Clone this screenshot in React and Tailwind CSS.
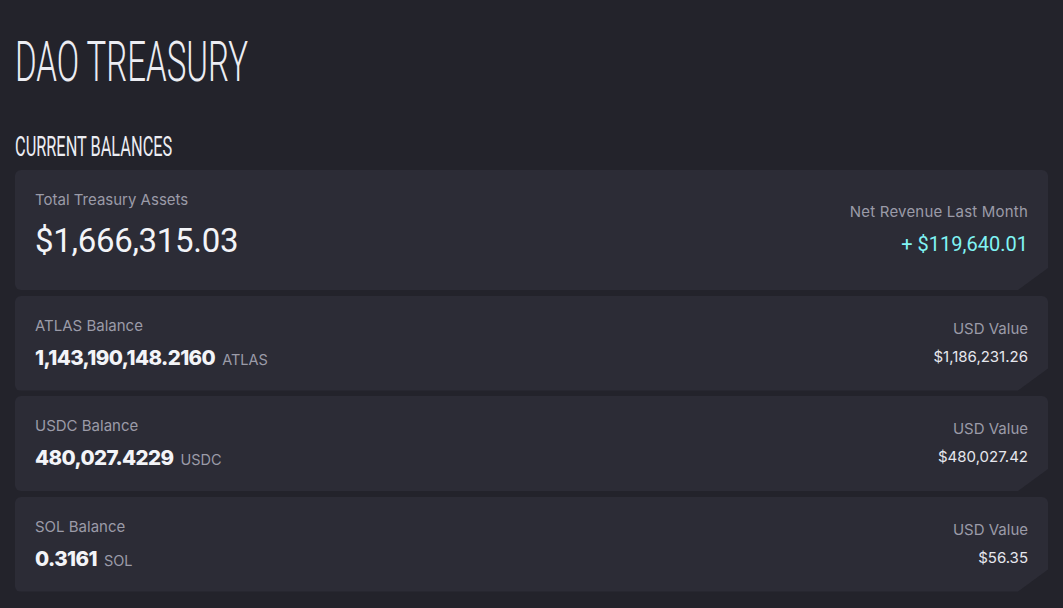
import React from 'react';

const balances = [
  { label: 'ATLAS Balance', amount: '1,143,190,148.2160', unit: 'ATLAS', usd: '$1,186,231.26' },
  { label: 'USDC Balance', amount: '480,027.4229', unit: 'USDC', usd: '$480,027.42' },
  { label: 'SOL Balance', amount: '0.3161', unit: 'SOL', usd: '$56.35' },
];

const cardClass =
  'bg-[#2c2c36] rounded-md [clip-path:polygon(0_0,100%_0,100%_calc(100%-22px),calc(100%-30px)_100%,0_100%)]';

const App = () => {
  return (
    <div className="min-h-[608px] bg-[#23232b] px-[15px] pt-[34px] pb-4 font-['Inter','Roboto',sans-serif]">
      <div className="h-[56px]">
        <h1 className="font-['Roboto',sans-serif] font-light text-[#ecedf3] text-[56px] leading-[56px] origin-left scale-x-[0.59] inline-block whitespace-nowrap">
          DAO TREASURY
        </h1>
      </div>

      <div className="mt-[44px] h-[27px]">
        <h2 className="font-['Roboto',sans-serif] text-[#ecedf3] text-[27px] leading-[27px] origin-left scale-x-[0.605] inline-block whitespace-nowrap">
          CURRENT BALANCES
        </h2>
      </div>

      <div className="mt-[9px] flex flex-col gap-[5.5px]">
        <div className={`${cardClass} h-[120px] px-5 flex justify-between`}>
          <div className="pt-[20px]">
            <div className="text-[15px] text-[#9b9ba8] leading-[20px]">Total Treasury Assets</div>
            <div className="mt-[12px] font-['Roboto',sans-serif] text-[33px] leading-[38px] text-[#f3f4f8] tracking-[-0.3px]">
              $1,666,315.03
            </div>
          </div>
          <div className="pt-[32px] text-right">
            <div className="text-[15px] text-[#9b9ba8] leading-[20px] tracking-[0.2px]">Net Revenue Last Month</div>
            <div className="mt-[10px] text-[20px] leading-[24px] text-[#80f4f4] font-['Roboto',sans-serif]">
              + $119,640.01
            </div>
          </div>
        </div>

        {balances.map((b) => (
          <div key={b.label} className={`${cardClass} h-[95px] px-5 flex justify-between`}>
            <div className="pt-[20px]">
              <div className="text-[15px] text-[#9b9ba8] leading-[20px]">{b.label}</div>
              <div className="mt-[10px] flex items-baseline gap-[7px]">
                <span className="text-[20.5px] leading-[24px] font-extrabold text-[#f3f4f8] tracking-[-0.6px]">{b.amount}</span>
                <span className="text-[14.5px] text-[#9b9ba8]">{b.unit}</span>
              </div>
            </div>
            <div className="pt-[23px] text-right">
              <div className="text-[15px] text-[#9b9ba8] leading-[20px]">USD Value</div>
              <div className="mt-[8px] text-[15px] leading-[20px] text-[#e6e7ee]">{b.usd}</div>
            </div>
          </div>
        ))}
      </div>
    </div>
  );
};

export default App;
